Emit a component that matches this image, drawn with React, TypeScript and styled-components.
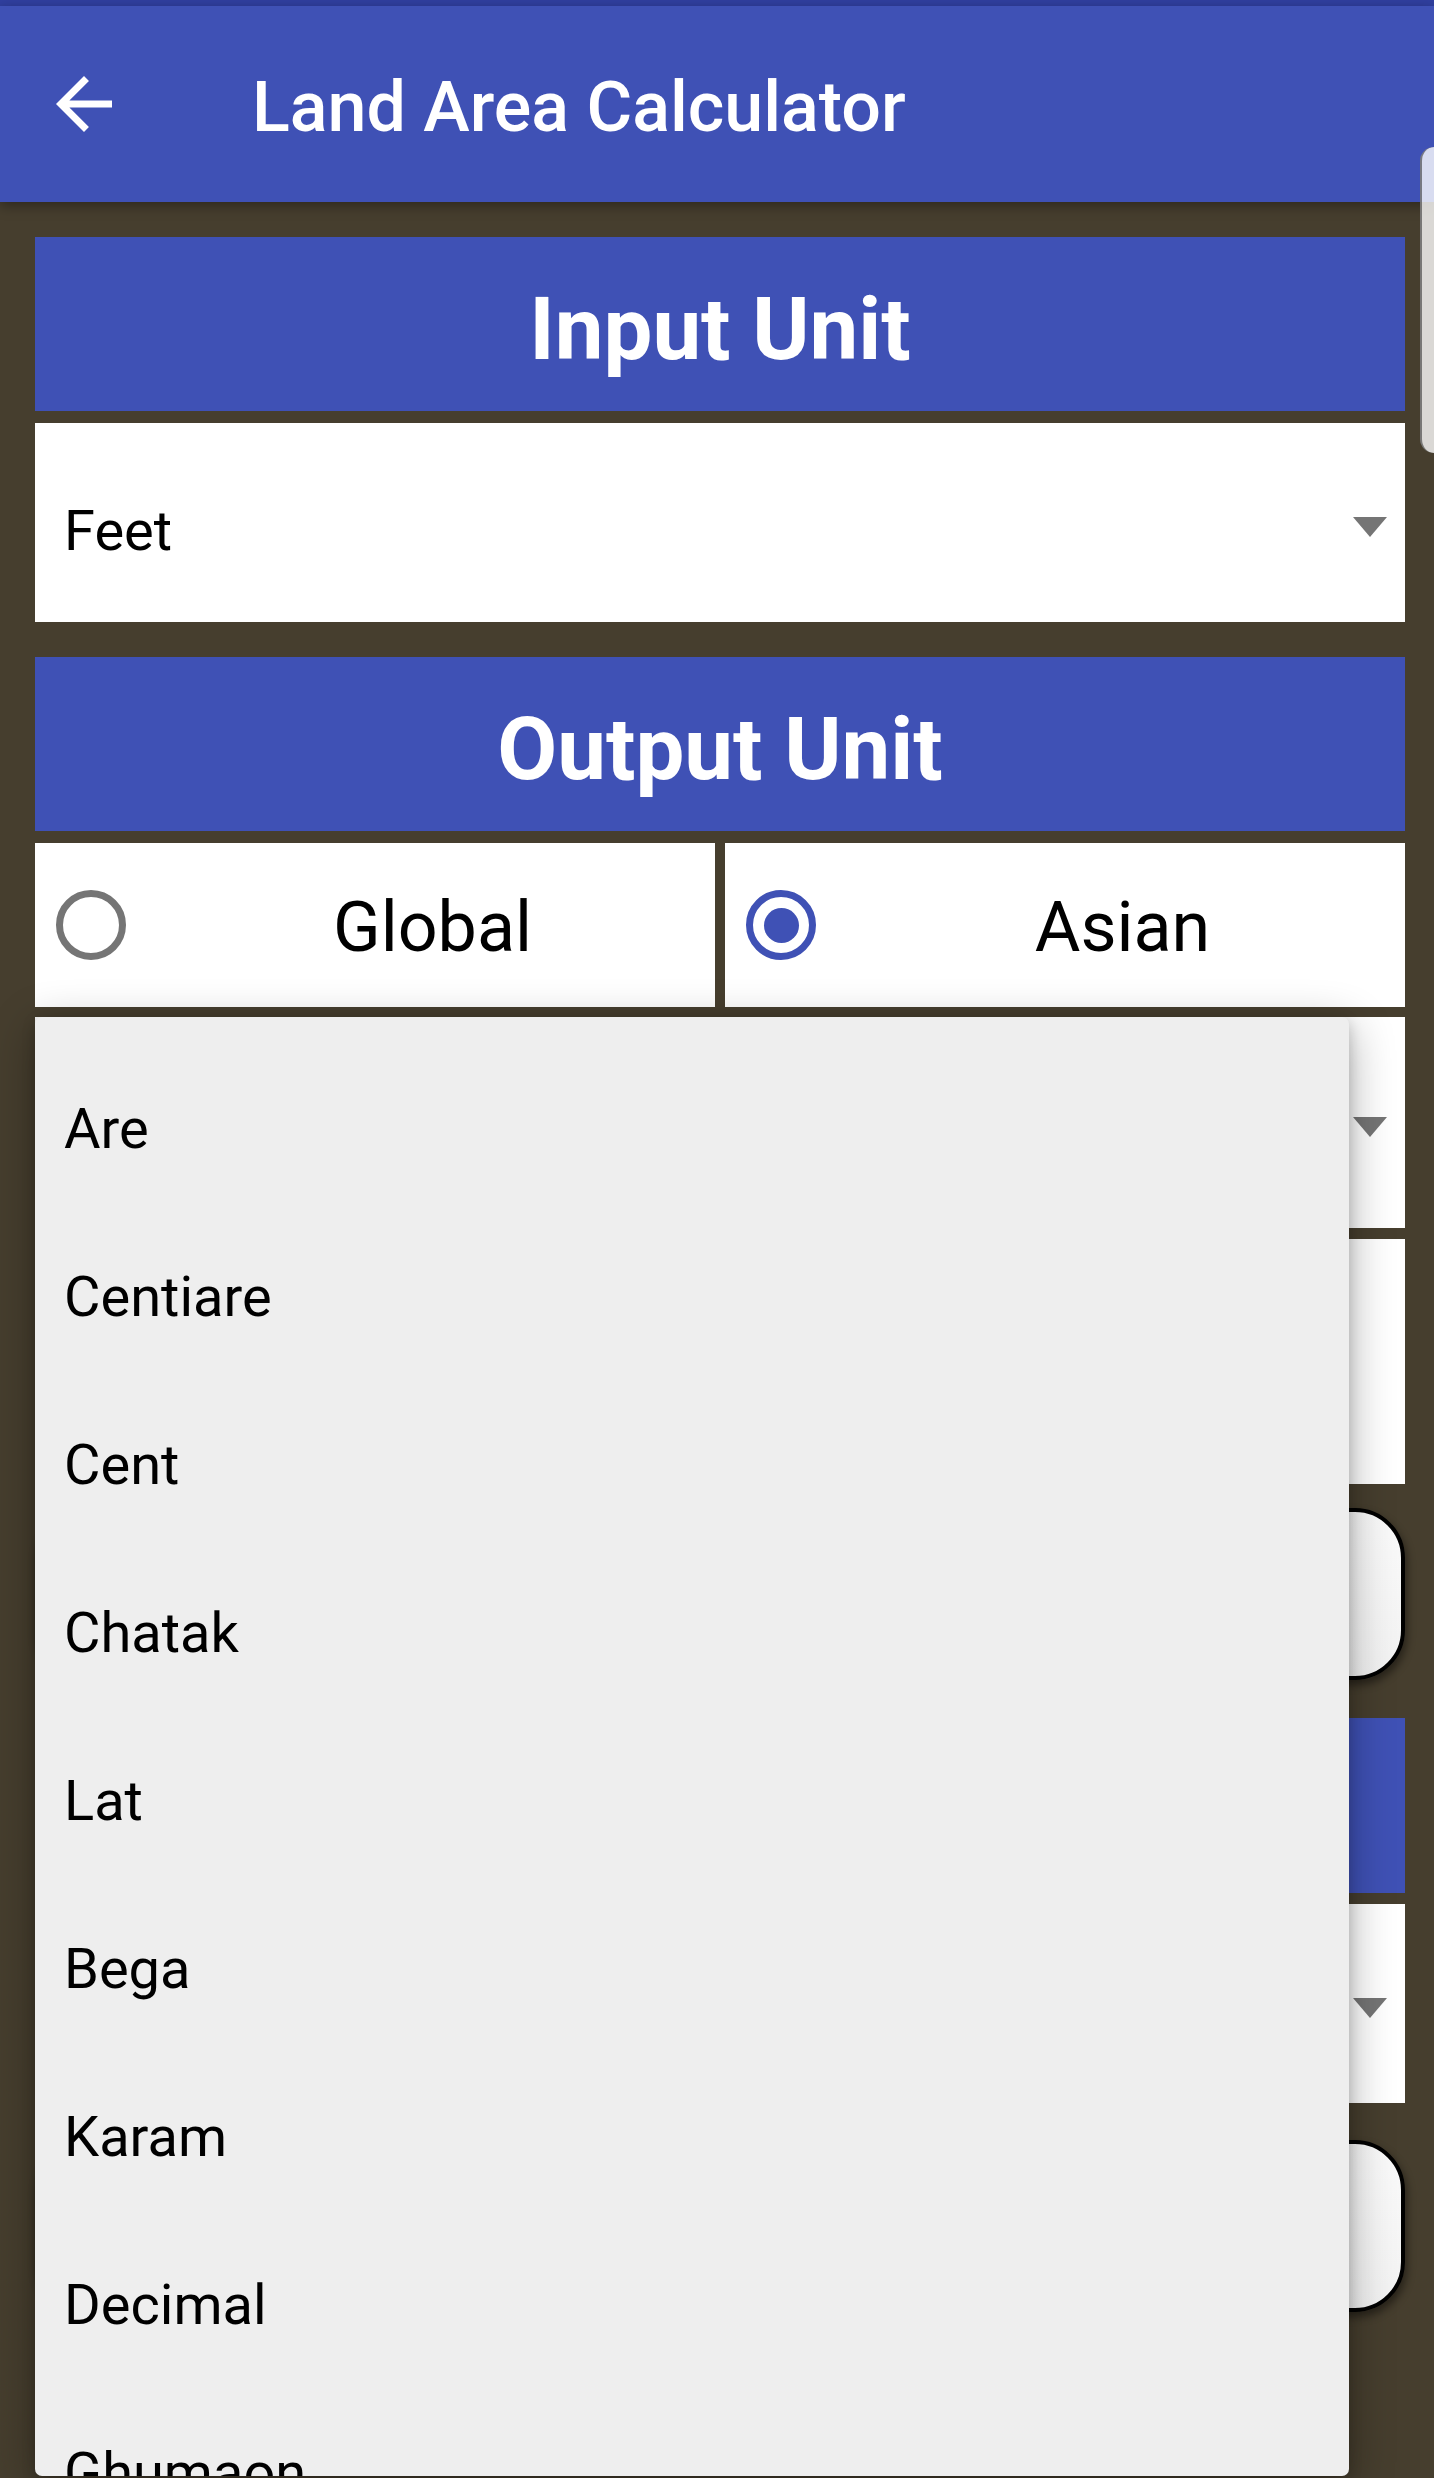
import React from "react";
import styled, { createGlobalStyle } from "styled-components";

const GlobalStyle = createGlobalStyle`
  html, body {
    margin: 0;
    padding: 0;
    background: #463e2e;
    font-family: Roboto, "Noto Sans", "Liberation Sans", sans-serif;
  }
  * { box-sizing: border-box; }
`;

const INDIGO = "#3f51b5";

const Screen = styled.div`
  position: relative;
  width: 1434px;
  height: 2478px;
  overflow: hidden;
  background: #463e2e;
`;

const StatusStrip = styled.div`
  height: 6px;
  background: #303f9f;
`;

const AppBar = styled.header`
  position: relative;
  z-index: 2;
  height: 196px;
  display: flex;
  align-items: center;
  background: ${INDIGO};
  box-shadow: 0 4px 12px rgba(0, 0, 0, 0.35);
`;

const BackButton = styled.div`
  width: 84px;
  height: 84px;
  margin-left: 42px;
  display: flex;
`;

const Title = styled.h1`
  margin: 0 0 0 126px;
  padding-top: 6px;
  font-size: 70px;
  line-height: 1;
  font-weight: 500;
  color: #fff;
`;

const Content = styled.main`
  display: flex;
  flex-direction: column;
  padding: 35px 29px 0 35px;
`;

const SectionHeader = styled.div<{ $top?: number; $h?: number }>`
  margin-top: ${(p) => p.$top ?? 0}px;
  height: ${(p) => p.$h ?? 174}px;
  display: flex;
  align-items: center;
  justify-content: center;
  padding-top: 11px;
  background: ${INDIGO};
  color: #fff;
  font-size: 87px;
  line-height: 1;
  font-weight: 700;
`;

const Spinner = styled.div<{ $top: number; $h: number }>`
  margin-top: ${(p) => p.$top}px;
  height: ${(p) => p.$h}px;
  display: flex;
  align-items: center;
  padding: 8px 18px 0 29px;
  background: #fff;
`;

const SpinnerText = styled.span`
  flex: 1;
  margin-top: 8px;
  font-size: 56px;
  line-height: 1;
  color: #000;
`;

const Caret = styled.span`
  margin-left: auto;
  width: 0;
  height: 0;
  border-left: 17px solid transparent;
  border-right: 17px solid transparent;
  border-top: 20px solid #757575;
`;

const RadioRow = styled.div`
  margin-top: 12px;
  height: 164px;
  display: grid;
  grid-template-columns: 1fr 1fr;
  gap: 10px;
`;

const RadioCell = styled.label`
  display: flex;
  align-items: center;
  padding-left: 21px;
  background: #fff;
`;

const RadioMark = styled.span<{ $checked?: boolean }>`
  flex: none;
  width: 70px;
  height: 70px;
  border-radius: 50%;
  border: 7px solid ${(p) => (p.$checked ? INDIGO : "#757575")};
  display: flex;
  align-items: center;
  justify-content: center;
  &::after {
    content: "";
    display: ${(p) => (p.$checked ? "block" : "none")};
    width: 35px;
    height: 35px;
    border-radius: 50%;
    background: ${INDIGO};
  }
`;

const RadioLabel = styled.span`
  flex: 1;
  margin-left: 24px;
  padding-top: 4px;
  text-align: center;
  font-size: 70px;
  line-height: 1;
  color: #000;
`;

const InputBox = styled.div`
  margin-top: 11px;
  height: 245px;
  background: #fff;
`;

const RoundButton = styled.div<{ $top: number }>`
  margin-top: ${(p) => p.$top}px;
  height: 172px;
  border: 4px solid #000;
  border-radius: 50px;
  background: linear-gradient(#fafafa, #f2f2f2);
  box-shadow: 2px 5px 8px rgba(0, 0, 0, 0.45);
`;

const Popup = styled.ul`
  position: absolute;
  z-index: 5;
  top: 1017px;
  left: 35px;
  width: 1314px;
  height: 1459px;
  margin: 0;
  padding: 28px 0 0;
  list-style: none;
  overflow: hidden;
  border-radius: 7px;
  background: #eeeeee;
  box-shadow: 0 10px 46px rgba(0, 0, 0, 0.32), 0 4px 14px rgba(0, 0, 0, 0.18);
`;

const PopupItem = styled.li`
  height: 168px;
  display: flex;
  align-items: center;
  padding-left: 29px;
  font-size: 56px;
  line-height: 1;
  color: #000;
`;

const EdgeHandle = styled.div`
  position: absolute;
  z-index: 6;
  top: 147px;
  right: 0;
  width: 14px;
  height: 306px;
  border-radius: 18px 0 0 18px;
  background: rgba(255, 255, 255, 0.8);
  border-left: 2px solid rgba(40, 40, 40, 0.55);
`;

const units = ["Are", "Centiare", "Cent", "Chatak", "Lat", "Bega", "Karam", "Decimal", "Ghumaon"];

const BackArrow = () => (
  <svg width="84" height="84" viewBox="0 0 24 24" fill="#fff">
    <path d="M20 11H7.83l5.59-5.59L12 4l-8 8 8 8 1.41-1.41L7.83 13H20v-2z" />
  </svg>
);

export default function App() {
  return (
    <>
      <GlobalStyle />
      <Screen>
        <StatusStrip />
        <AppBar>
          <BackButton>
            <BackArrow />
          </BackButton>
          <Title>Land Area Calculator</Title>
        </AppBar>

        <Content>
          <SectionHeader>Input Unit</SectionHeader>
          <Spinner $top={12} $h={199}>
            <SpinnerText>Feet</SpinnerText>
            <Caret />
          </Spinner>

          <SectionHeader $top={35}>Output Unit</SectionHeader>
          <RadioRow>
            <RadioCell>
              <RadioMark />
              <RadioLabel>Global</RadioLabel>
            </RadioCell>
            <RadioCell>
              <RadioMark $checked />
              <RadioLabel>Asian</RadioLabel>
            </RadioCell>
          </RadioRow>
          <Spinner $top={10} $h={211}>
            <Caret />
          </Spinner>
          <InputBox />
          <RoundButton $top={24} />

          <SectionHeader $top={38} $h={175} />
          <Spinner $top={11} $h={199}>
            <Caret />
          </Spinner>
          <RoundButton $top={37} />
        </Content>

        <Popup>
          {units.map((u) => (
            <PopupItem key={u}>{u}</PopupItem>
          ))}
        </Popup>

        <EdgeHandle />
      </Screen>
    </>
  );
}
